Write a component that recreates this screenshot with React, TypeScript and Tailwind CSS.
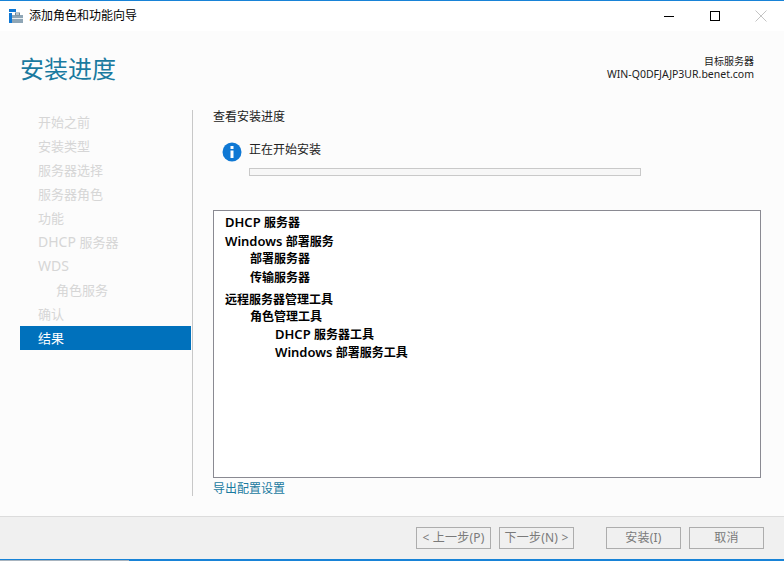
const font = "font-['Noto_Sans','Noto_Sans_CJK_SC',sans-serif]"

const steps = [
  { latin: "", label: "开始之前" },
  { latin: "", label: "安装类型" },
  { latin: "", label: "服务器选择" },
  { latin: "", label: "服务器角色" },
  { latin: "", label: "功能" },
  { latin: "DHCP ", label: "服务器" },
  { latin: "WDS", label: "" },
  { latin: "", label: "角色服务", sub: true },
  { latin: "", label: "确认" },
]

const tree = [
  { latin: "DHCP ", label: "服务器", cls: "h-[19px]", indent: "pl-[11px]" },
  { latin: "Windows ", label: "部署服务", cls: "h-[17px]", indent: "pl-[11px]" },
  { latin: "", label: "部署服务器", cls: "h-[19px]", indent: "pl-[36px]" },
  { latin: "", label: "传输服务器", cls: "h-[22px]", indent: "pl-[36px]" },
  { latin: "", label: "远程服务器管理工具", cls: "h-[17px]", indent: "pl-[11px]" },
  { latin: "", label: "角色管理工具", cls: "h-[18px]", indent: "pl-[36px]" },
  { latin: "DHCP ", label: "服务器工具", cls: "h-[18px]", indent: "pl-[61px]" },
  { latin: "Windows ", label: "部署服务工具", cls: "h-[19px]", indent: "pl-[61px]" },
]

function Btn({ children, className }: { children: React.ReactNode; className?: string }) {
  return (
    <div className={`w-[75px] h-[22px] border border-[#adadad] flex items-center justify-center text-[12px] tracking-[0.2px] text-[#7a7a7a] ${className ?? ""}`}>
      {children}
    </div>
  )
}

export default function App() {
  return (
    <div className={`${font} w-[784px] h-[561px] overflow-hidden flex flex-col bg-[#fcfcfc] text-[12px] leading-none`}>
      {/* title bar */}
      <div className="h-[31px] shrink-0 bg-white border-t border-t-[#1883d7] flex items-center pl-[9px]">
        <svg width="14" height="14" viewBox="0 0 14 14" className="mt-[-1px]">
          <rect x="0" y="0" width="7" height="3" fill="#0f78d4" />
          <rect x="0" y="4" width="3" height="10" fill="#0f78d4" />
          <rect x="3" y="6" width="11" height="8" fill="#8fa6b6" />
          <rect x="3" y="9" width="11" height="1" fill="#e6edf2" />
          <rect x="6.5" y="4" width="4" height="2" fill="none" stroke="#6f8798" strokeWidth="1" />
        </svg>
        <span className="ml-[6px] text-[12px] text-black">添加角色和功能向导</span>
        <div className="ml-auto flex items-center">
          <svg width="12" height="12" viewBox="0 0 12 12" className="mr-[34px]"><path d="M1 6.5h10" stroke="#000" strokeWidth="1" /></svg>
          <svg width="12" height="12" viewBox="0 0 12 12" className="mr-[34px]"><rect x="1.5" y="1.5" width="9" height="9" fill="none" stroke="#000" strokeWidth="1" /></svg>
          <svg width="12" height="12" viewBox="0 0 12 12" className="mr-[17px]"><path d="M.5.5l11 11M11.5.5l-11 11" stroke="#c4c4c4" strokeWidth="1" /></svg>
        </div>
      </div>

      {/* header */}
      <div className="h-[79px] shrink-0 flex justify-between">
        <h1 className="pl-[20px] pt-[25px] text-[24px] font-normal leading-[26px] text-[#1a7a9f]">安装进度</h1>
        <div className="pr-[30px] pt-[24px] text-right leading-[13px] text-[#222]">
          <div className="text-[10px]">目标服务器</div>
          <div className="text-[10.5px]">WIN-Q0DFJAJP3UR.benet.com</div>
        </div>
      </div>

      {/* body */}
      <div className="flex-1 flex min-h-0">
        <div className="w-[193px] shrink-0 h-[386px] border-r border-r-[#c8c8c8] flex flex-col pl-[20px]">
          {steps.map((s) => (
            <div key={s.latin + s.label} className={`h-[24px] w-[171px] flex items-center whitespace-pre text-[13px] text-[#d6d6d6] ${s.sub ? "pl-[36px]" : "pl-[18px]"}`}>
              {s.latin && <span className="text-[14px]">{s.latin}</span>}
              {s.label}
            </div>
          ))}
          <div className="h-[24px] w-[171px] bg-[#0071bc] flex items-center pl-[18px] text-[13px] text-white">结果</div>
        </div>
        <div className="flex-1 pl-[20px] pr-[23px] flex flex-col">
          <div className="h-[13px] flex items-center text-[12px] text-[#222]">查看安装进度</div>
          <div className="flex mt-[18px] pl-[9px]">
            <svg width="20" height="20" viewBox="0 0 20 20" className="mt-[1px]">
              <circle cx="10" cy="10" r="9.5" fill="#0f78d4" />
              <rect x="8.5" y="4" width="3" height="3" fill="#fff" />
              <rect x="8.5" y="8.5" width="3" height="7.5" fill="#fff" />
            </svg>
            <div className="ml-[7px]">
              <div className="h-[17px] flex items-center text-[12px] text-[#222]">正在开始安装</div>
              <div className="mt-[10px] w-[392px] h-[8px] border border-[#c9c9c9] bg-[#f7f7f7]" />
            </div>
          </div>
          <div className="mt-[34px] w-[548px] h-[268px] border border-[#8a8a92] bg-white pt-[3px] font-semibold text-black text-[12px]">
            {tree.map((t) => (
              <div key={t.latin + t.label} className={`${t.cls} ${t.indent} flex items-start whitespace-pre leading-[17px]`}>
                {t.latin && <span className="text-[13px]">{t.latin}</span>}
                <span>{t.label}</span>
              </div>
            ))}
          </div>
          <div className="mt-[4px] text-[12px] leading-[14px] text-[#1a7a9f]">导出配置设置</div>
        </div>
      </div>

      {/* footer */}
      <div className="h-[45px] shrink-0 bg-[#f0f0f0] border-t border-t-[#dcdcdc] flex items-start justify-end pt-[10px] pr-[20px]">
        <Btn>&lt; 上一步(P)</Btn>
        <Btn className="ml-[8px]">下一步(N) &gt;</Btn>
        <Btn className="ml-[32px]">安装(I)</Btn>
        <Btn className="ml-[8px]">取消</Btn>
      </div>
      <div className="h-[2px] -mt-[2px] shrink-0 flex relative">
        <div className="w-[129px] border-t border-t-[#1883d7] bg-[#a8b4bf]" />
        <div className="flex-1 bg-[#1883d7]" />
      </div>
    </div>
  )
}
